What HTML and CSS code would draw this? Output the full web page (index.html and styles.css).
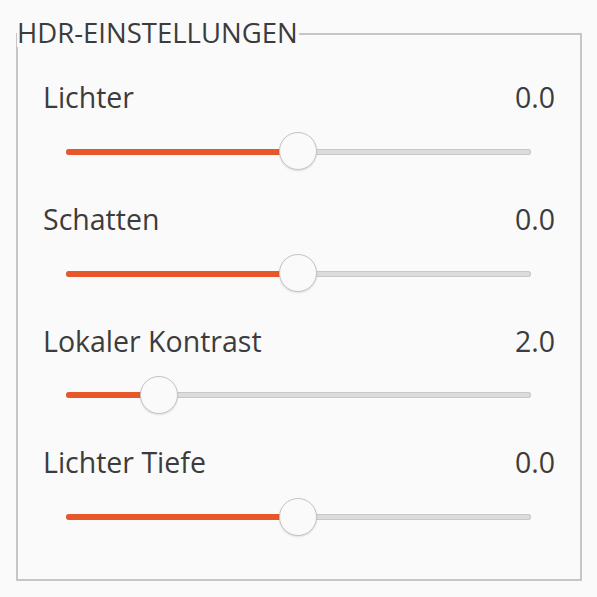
FILE: index.html
```html
<!DOCTYPE html>
<html lang="de">
<head>
<meta charset="utf-8">
<link rel="stylesheet" href="styles.css">
</head>
<body>
<div class="frame">
  <div class="legend">HDR-EINSTELLUNGEN</div>
  <div class="rows">
    <div class="row">
      <div class="head"><span>Lichter</span><span>0.0</span></div>
      <div class="slider"><div class="track"><div class="fill" style="width:50%"></div><div class="knob" style="left:50%"></div></div></div>
    </div>
    <div class="row">
      <div class="head"><span>Schatten</span><span>0.0</span></div>
      <div class="slider"><div class="track"><div class="fill" style="width:50%"></div><div class="knob" style="left:50%"></div></div></div>
    </div>
    <div class="row">
      <div class="head"><span>Lokaler Kontrast</span><span>2.0</span></div>
      <div class="slider"><div class="track"><div class="fill" style="width:20%"></div><div class="knob" style="left:20%"></div></div></div>
    </div>
    <div class="row">
      <div class="head"><span>Lichter Tiefe</span><span>0.0</span></div>
      <div class="slider"><div class="track"><div class="fill" style="width:50%"></div><div class="knob" style="left:50%"></div></div></div>
    </div>
  </div>
</div>
</body>
</html>
```
FILE: styles.css
```css
html, body {
  margin: 0;
  padding: 0;
  background: #fafafa;
}
body {
  font-family: "Open Sans", "Noto Sans", sans-serif;
  color: #3c3c3c;
  width: 597px;
  height: 597px;
  overflow: hidden;
}
.frame {
  margin: 33px 0 0 16px;
  width: 562px;
  height: 544px;
  border: 2px solid #c6c6c6;
}
.legend {
  width: fit-content;
  margin: -17.2px 0 0 -1px;
  padding: 0 1px 0 0;
  font-size: 27.5px;
  line-height: 29px;
  background: #fafafa;
}
.rows {
  padding: 34.2px 25px 0 25px;
  display: flex;
  flex-direction: column;
  gap: 31px;
}
.head {
  display: flex;
  justify-content: space-between;
  font-size: 28.5px;
  line-height: 32px;
}
.slider {
  margin-top: 18.8px;
  height: 40px;
  padding: 0 24px 0 23px;
  display: flex;
  align-items: center;
}
.track {
  position: relative;
  flex: 1;
  height: 6px;
  border-radius: 3px;
  background: #dcdcdc;
  box-shadow: inset 0 0 0 1px #c8c8c8;
}
.fill {
  height: 100%;
  border-radius: 3px;
  background: #e8572a;
}
.knob {
  position: absolute;
  top: 50%;
  width: 36px;
  height: 36px;
  margin: -19.5px 0 0 -19.5px;
  border-radius: 50%;
  background: #fafafa;
  border: 1.5px solid #c4c4c4;
  box-shadow: 0 1px 2px rgba(0,0,0,0.12);
}
```
